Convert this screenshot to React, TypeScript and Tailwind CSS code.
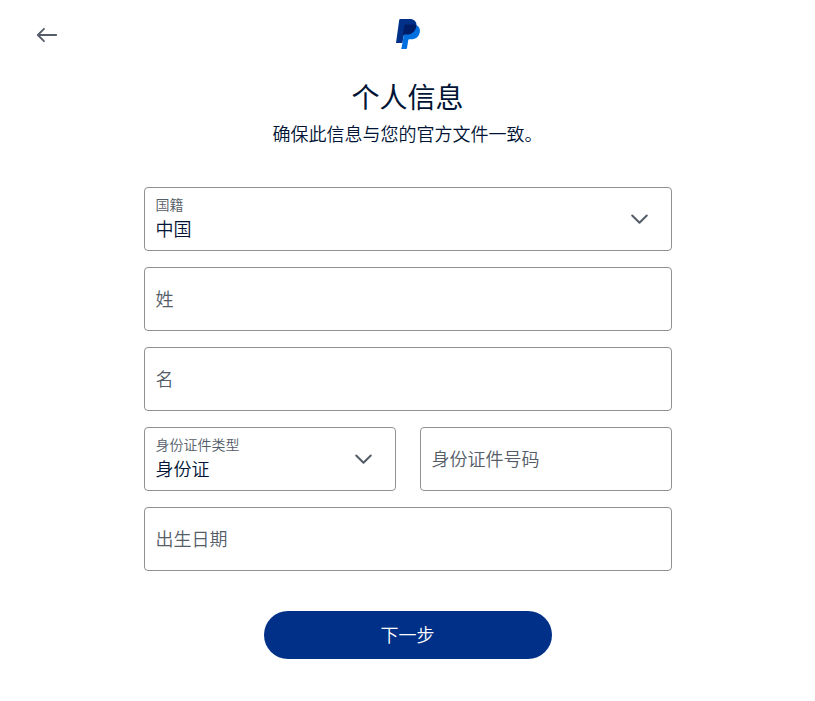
import React, { useState } from 'react';

type FieldProps = {
  id: string;
  label: string;
};

type SelectFieldProps = FieldProps & {
  options: string[];
};

const COUNTRIES = ['中国', '中国香港', '新加坡', '美国'];
const ID_TYPES = ['身份证', '护照'];

const BackArrow = () => (
  <svg width="24" height="24" viewBox="0 0 24 24" fill="none" stroke="currentColor" strokeWidth="1.8" strokeLinecap="round" strokeLinejoin="round" aria-hidden="true">
    <path d="M20.2 12H2M8 5.800L1.800 12l6.200 6.200" />
  </svg>
);

const Chevron = () => (
  <svg width="24" height="24" viewBox="0 0 24 24" fill="none" stroke="currentColor" strokeWidth="2" strokeLinecap="round" strokeLinejoin="round" aria-hidden="true">
    <path d="M4.200 8.500l7.300 7.300 7.300-7.300" />
  </svg>
);

const Logo = () => (
  <svg width="32" height="32" viewBox="-5 0 32 32" aria-hidden="true">
    {/* back P */}
    <path fill="#003087" d="M4.300 0h9.400c4.200 0 7 2.600 6.800 6.400-.4 5.400-4.200 9.100-9 9.100H8l-1.600 8.500H0L3.200 1.100C3.300.4 3.700 0 4.300 0z" />
    {/* front P */}
    <path fill="#0070e0" d="M20.500 6.200c2.700 1.300 3.900 3.900 3.300 7-.8 4.300-4.100 7.100-8.600 7.100h-1.700c-.7 0-1.200.5-1.300 1.100L11 28.900c-.1.700-.7 1.100-1.300 1.100H5.300L8 15.500z" />
    {/* overlap */}
    <path fill="#001c64" d="M20.500 6.200c-.5 5.600-4.300 9.300-9.300 9.300H8.800L7 16.300l1.400-9.100c.2-1 1-1.700 2-1.700h6.700c1.300 0 2.500.2 3.400.7z" />
  </svg>
);

const TextField = ({ id, label }: FieldProps) => (
  <div className="relative min-w-0 flex-1">
    <input
      id={id}
      name={id}
      type="text"
      placeholder=" "
      className="peer block h-16 w-full rounded border border-[#909191] bg-white px-[11px] pt-[18px] text-lg text-[#001435] outline-none focus:border-[#0070e0]"
    />
    <label
      htmlFor={id}
      className="pointer-events-none absolute left-3 top-2 text-sm leading-[18px] text-[#545d68] peer-placeholder-shown:top-5 peer-placeholder-shown:text-lg peer-placeholder-shown:leading-[22px]"
    >
      {label}
    </label>
  </div>
);

const SelectField = ({ id, label, options }: SelectFieldProps) => {
  const [value, setValue] = useState(options[0]);

  return (
    <div className="relative min-w-0 flex-1">
      <select
        id={id}
        name={id}
        value={value}
        onChange={(e) => setValue(e.target.value)}
        className="block h-16 w-full appearance-none rounded border border-[#909191] bg-white pl-[11px] pr-14 pt-[18px] text-lg text-[#001435] outline-none focus:border-[#0070e0]"
      >
        {options.map((option) => (
          <option key={option}>{option}</option>
        ))}
      </select>
      <label htmlFor={id} className="pointer-events-none absolute left-3 top-2 text-sm leading-[18px] text-[#545d68]">
        {label}
      </label>
      <span className="pointer-events-none absolute right-5 top-5 text-[#545d68]">
        <Chevron />
      </span>
    </div>
  );
};

const App = () => {
  return (
    <div className="min-h-screen bg-white font-['Noto_Sans_CJK_SC',sans-serif] font-[350] text-[#001435]">
      {/* Header */}
      <header className="grid grid-cols-3 items-center px-9 pt-[19px]">
        <button type="button" aria-label="返回" className="w-6 text-[#545d68]">
          <BackArrow />
        </button>
        <div className="flex justify-center">
          <Logo />
        </div>
      </header>

      <main className="mx-auto max-w-xl px-6 pb-10 pt-7">
        <h1 className="text-center text-[28px] font-normal leading-[34px]">个人信息</h1>
        <p className="mt-2 text-center text-lg leading-6">确保此信息与您的官方文件一致。</p>

        <form className="mt-[42px] flex flex-col gap-4" onSubmit={(e) => e.preventDefault()}>
          <SelectField id="nationality" label="国籍" options={COUNTRIES} />
          <TextField id="lastName" label="姓" />
          <TextField id="firstName" label="名" />
          <div className="flex gap-6">
            <SelectField id="idType" label="身份证件类型" options={ID_TYPES} />
            <TextField id="idNumber" label="身份证件号码" />
          </div>
          <TextField id="birthDate" label="出生日期" />
          <button type="submit" className="mx-auto mt-6 h-12 w-72 rounded-full bg-[#003087] pb-0.5 text-lg text-white">
            下一步
          </button>
        </form>
      </main>
    </div>
  );
};

export default App;
